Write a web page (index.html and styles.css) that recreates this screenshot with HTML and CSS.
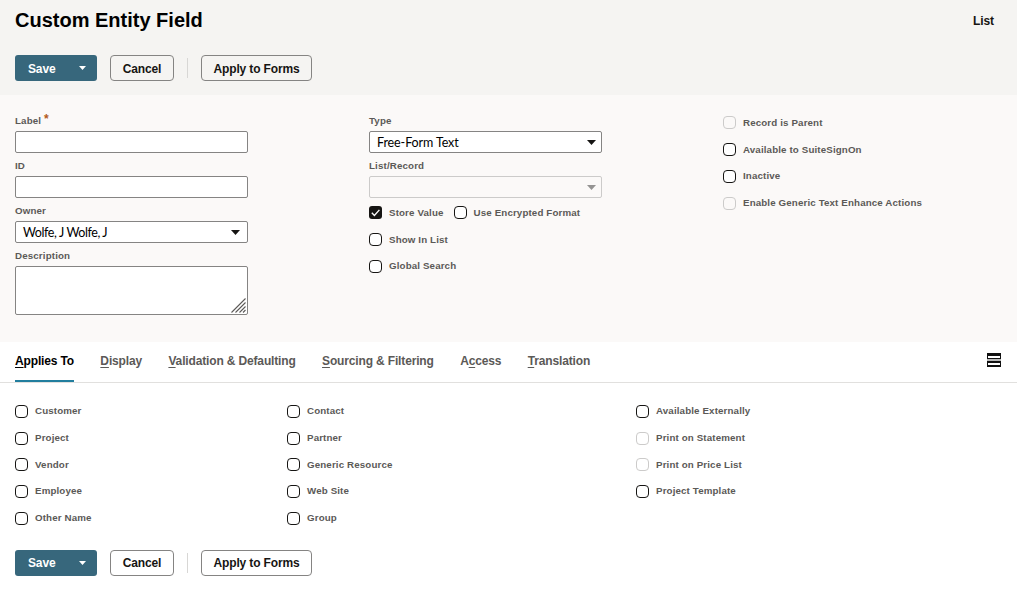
FILE: index.html
```html
<!DOCTYPE html>
<html lang="en">
<head>
<meta charset="utf-8">
<title>Custom Entity Field</title>
<link rel="stylesheet" href="styles.css">
</head>
<body>
<header class="header">
  <div class="title-row"><h1 class="title">Custom Entity Field</h1><a class="list-link">List</a></div>
  <div class="actions">
    <div class="save"><span class="save-text">Save</span><svg class="save-arrow" width="7" height="4" viewBox="0 0 7 4"><path d="M0 0h7L3.5 4z" fill="#fff"/></svg></div>
    <div class="btn btn-cancel">Cancel</div>
    <div class="divider"></div>
    <div class="btn btn-apply">Apply to Forms</div>
  </div>
</header>
<section class="form">
  <div class="col">
    <div class="label">Label <span class="required">*</span></div>
    <div class="input"></div>
    <div class="label">ID</div>
    <div class="input"></div>
    <div class="label">Owner</div>
    <div class="input select"><span class="owner">Wolfe, J Wolfe, J</span><svg width="9" height="5" viewBox="0 0 9 5"><path d="M0 0h9L4.5 5z" fill="#161513"/></svg></div>
    <div class="label">Description</div>
    <div class="textarea"><svg width="15" height="15" viewBox="0 0 15 15"><path d="M.5 14.5l14-14M4.5 14.5l10-10M8.5 14.5l6-6M12 14.5l2.5-2.5" stroke="#5c5a58" stroke-width="1.1" fill="none"/></svg></div>
  </div>
  <div class="col">
    <div class="label">Type</div>
    <div class="input select type-select"><span class="type">Free-Form Text</span><svg width="9" height="5" viewBox="0 0 9 5"><path d="M0 0h9L4.5 5z" fill="#161513"/></svg></div>
    <div class="label">List/Record</div>
    <div class="input select type-select disabled"><span></span><svg width="9" height="5" viewBox="0 0 9 5"><path d="M0 0h9L4.5 5z" fill="#949392"/></svg></div>
    <div class="checks">
      <div class="check"><span class="box checked"><svg width="13" height="13" viewBox="0 0 13 13"><path d="M2.8 6.8l2.6 2.6 5-5.5" stroke="#fff" stroke-width="1.4" fill="none"/></svg></span><span>Store Value</span><span class="box box-second"></span><span>Use Encrypted Format</span></div>
      <div class="check"><span class="box"></span>Show In List</div>
      <div class="check"><span class="box"></span>Global Search</div>
    </div>
  </div>
  <div class="col checks-right">
    <div class="check"><span class="box off"></span>Record is Parent</div>
    <div class="check"><span class="box"></span>Available to SuiteSignOn</div>
    <div class="check"><span class="box"></span>Inactive</div>
    <div class="check"><span class="box off"></span>Enable Generic Text Enhance Actions</div>
  </div>
</section>
<nav class="tabs">
  <div class="tab active"><u>A</u>pplies To</div>
  <div class="tab"><u>D</u>isplay</div>
  <div class="tab"><u>V</u>alidation &amp; Defaulting</div>
  <div class="tab"><u>S</u>ourcing &amp; Filtering</div>
  <div class="tab">A<u>c</u>cess</div>
  <div class="tab"><u>T</u>ranslation</div>
  <svg class="layout-icon" width="14" height="14" viewBox="0 0 14 14" shape-rendering="crispEdges"><path d="M0 0h14v6H0z" fill="#111"/><path d="M1 3h12v2H1z" fill="#fff"/><path d="M0 6h14v2H0z" fill="#b9b9b9"/><path d="M0 8h14v6H0z" fill="#111"/><path d="M1 10h12v2H1z" fill="#fff"/></svg>
</nav>
<section class="applies">
  <div>
    <div class="check"><span class="box"></span>Customer</div>
    <div class="check"><span class="box"></span>Project</div>
    <div class="check"><span class="box"></span>Vendor</div>
    <div class="check"><span class="box"></span>Employee</div>
    <div class="check"><span class="box"></span>Other Name</div>
  </div>
  <div>
    <div class="check"><span class="box"></span>Contact</div>
    <div class="check"><span class="box"></span>Partner</div>
    <div class="check"><span class="box"></span>Generic Resource</div>
    <div class="check"><span class="box"></span>Web Site</div>
    <div class="check"><span class="box"></span>Group</div>
  </div>
  <div>
    <div class="check"><span class="box"></span>Available Externally</div>
    <div class="check"><span class="box off"></span>Print on Statement</div>
    <div class="check"><span class="box off"></span>Print on Price List</div>
    <div class="check"><span class="box"></span>Project Template</div>
  </div>
</section>
<footer class="footer">
  <div class="actions">
    <div class="save"><span class="save-text">Save</span><svg class="save-arrow" width="7" height="4" viewBox="0 0 7 4"><path d="M0 0h7L3.5 4z" fill="#fff"/></svg></div>
    <div class="btn btn-cancel">Cancel</div>
    <div class="divider"></div>
    <div class="btn btn-apply">Apply to Forms</div>
  </div>
</footer>
</body>
</html>
```
FILE: styles.css
```css
* { box-sizing: border-box; }
body {
  margin: 0;
  height: 596px;
  overflow: hidden;
  background: #fff;
  font-family: "Liberation Sans", Arial, sans-serif;
  font-weight: bold;
  color: #161513;
}
svg { display: block; flex: none; }
.header { height: 95px; padding: 0 23px 0 15px; background: #f5f4f2; }
.title-row { display: flex; justify-content: space-between; height: 55px; padding-top: 8px; }
.title { margin: 0; font-size: 20px; line-height: 24px; color: #000; }
.list-link { font-size: 12px; line-height: 26px; letter-spacing: -0.1px; }
.actions { display: flex; align-items: center; height: 26px; font-size: 12px; letter-spacing: -0.15px; white-space: nowrap; }
.save {
  display: flex;
  align-items: center;
  justify-content: space-between;
  width: 82px;
  height: 26px;
  padding: 0 11px 0 13px;
  border-radius: 3px;
  background: #37677c;
  color: #fff;
}
.save-text { line-height: 16px; }
.header .save-text { padding-top: 2px; }
.btn {
  height: 26px;
  border: 1px solid #858483;
  border-radius: 4px;
  line-height: 26px;
  text-align: center;
}
.footer .btn { line-height: 24px; }
.btn-cancel { width: 64px; margin-left: 13px; }
.btn-apply { width: 111px; }
.divider { width: 1px; height: 20px; margin: 0 13px; background: #d8d7d5; }
.form {
  display: grid;
  grid-template-columns: 354px 354px 1fr;
  height: 247px;
  padding: 13px 0 0 15px;
  background: #fbf9f8;
}
.label {
  height: 23px;
  padding-top: 7px;
  font-size: 9.75px;
  line-height: 12px;
  letter-spacing: 0.14px;
  color: #5b5957;
  white-space: nowrap;
}
.required { color: #b35a1e; font-size: 12px; line-height: 1px; vertical-align: 1px; }
.input {
  width: 233px;
  height: 22px;
  border: 1px solid #858483;
  border-radius: 2px;
  background: #fff;
}
.select {
  display: flex;
  align-items: center;
  justify-content: space-between;
  padding: 0 7px;
  font-family: Lato, "Open Sans", sans-serif;
  font-size: 12.5px;
  font-weight: normal;
  line-height: 20px;
  color: #000;
}
.type-select { padding-right: 5px; }
.type { padding-top: 1px; letter-spacing: -0.1px; }
.disabled { border-color: #cccbca; background: #fbf9f8; }
.owner { padding-top: 1px; letter-spacing: -0.4px; }
.textarea {
  display: flex;
  align-items: flex-end;
  justify-content: flex-end;
  width: 233px;
  height: 49px;
  padding: 1px;
  border: 1px solid #858483;
  border-radius: 2px;
  background: #fff;
}
.checks { padding-top: 1.6px; }
.checks-right { padding-top: 1.6px; }
.check {
  display: flex;
  align-items: center;
  height: 26.7px;
  font-size: 9.75px;
  line-height: 12px;
  letter-spacing: 0.13px;
  color: #5b5957;
  white-space: nowrap;
}
.box {
  flex: none;
  width: 13px;
  height: 13px;
  margin-right: 7px;
  border: 1px solid #161513;
  border-radius: 4px;
  background: #fff;
}
.off { border-color: #cccbca; background: transparent; }
.checked { border: 0; border-radius: 3px; background: #161513; }
.box-second { margin-left: 10px; }
.tabs {
  display: flex;
  gap: 26.4px;
  height: 41px;
  padding: 0 16px 0 15px;
  border-bottom: 1px solid #e1e0de;
  font-size: 12px;
  line-height: 38px;
  color: #5b5957;
  white-space: nowrap;
}
.tab { height: 40px; letter-spacing: -0.15px; }
.tab u { text-underline-offset: 2px; text-decoration-thickness: 1px; }
.active { border-bottom: 2px solid #227e9e; color: #000; }
.layout-icon { margin: 11px 0 0 auto; }
.applies { display: grid; grid-template-columns: 272px 349px 1fr; height: 167px; padding: 15px 0 0 15px; }
.footer { padding-left: 15px; }
```
